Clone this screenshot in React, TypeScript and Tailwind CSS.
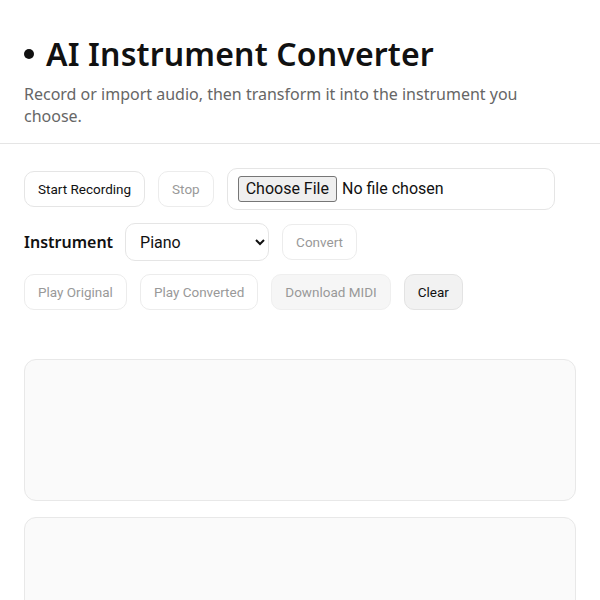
import React from "react";

const btn =
  "h-9 px-[13px] rounded-[10px] border text-[13.5px] font-['Roboto',sans-serif] leading-none";

export default function App() {
  return (
    <div className="min-h-[600px] bg-white font-['Noto_Sans',sans-serif] text-[#111]">
      <header className="px-6 pt-[35px] pb-[16px] border-b border-[#e5e5e5]">
        <h1 className="flex items-center text-[32px] font-semibold leading-[1.2] tracking-[0.15px]">
          <span className="inline-block w-[10px] h-[10px] rounded-full bg-[#111] mr-[12px]" />
          AI Instrument Converter
        </h1>
        <p className="mt-[10px] w-[530px] text-[16px] leading-[22px] text-[#666]">
          Record or import audio, then transform it into the instrument you choose.
        </p>
      </header>

      <main className="px-6 pt-6">
        <div className="flex flex-col gap-[13px]">
          <div className="flex items-center gap-[13px]">
            <button className={`${btn} bg-white border-[#e5e5e5] text-[#111]`}>Start Recording</button>
            <button className={`${btn} bg-white border-[#ececec] text-[#999]`} disabled>
              Stop
            </button>
            <div className="w-[328px] h-[42px] flex items-center px-[10px] rounded-[10px] border border-[#e5e5e5]">
              <input
                type="file"
                className="text-[16px] font-['Roboto',sans-serif] text-[#111] file:mr-[5px] file:px-[7px] file:h-[26px] file:bg-[#efefef] file:border file:border-[#767676] file:rounded-[3px] file:text-[#111]"
              />
            </div>
          </div>

          <div className="flex items-center gap-[12px]">
            <label className="text-[16px] font-semibold">Instrument</label>
            <select className="w-[144px] h-[38px] pl-[10px] pr-[8px] rounded-[10px] border border-[#e5e5e5] bg-white text-[16px] font-['Roboto',sans-serif] text-[#111]">
              <option>Piano</option>
              <option>Guitar</option>
              <option>Violin</option>
            </select>
            <button className={`${btn} bg-white border-[#ececec] text-[#999] ml-[1px]`} disabled>
              Convert
            </button>
          </div>

          <div className="flex items-center gap-[13px]">
            <button className={`${btn} bg-white border-[#ececec] text-[#999]`} disabled>
              Play Original
            </button>
            <button className={`${btn} bg-white border-[#ececec] text-[#999]`} disabled>
              Play Converted
            </button>
            <button className={`${btn} bg-[#f6f6f6] border-[#efefef] text-[#999]`} disabled>
              Download MIDI
            </button>
            <button className={`${btn} bg-[#f2f2f2] border-[#e3e3e3] text-[#111]`}>Clear</button>
          </div>
        </div>

        <div className="mt-[49px] flex flex-col gap-[16px]">
          <div className="h-[142px] rounded-[12px] border border-[#e8e8e8] bg-[#fafafa]" />
          <div className="h-[142px] rounded-[12px] border border-[#e8e8e8] bg-[#fafafa]" />
        </div>
      </main>
    </div>
  );
}
